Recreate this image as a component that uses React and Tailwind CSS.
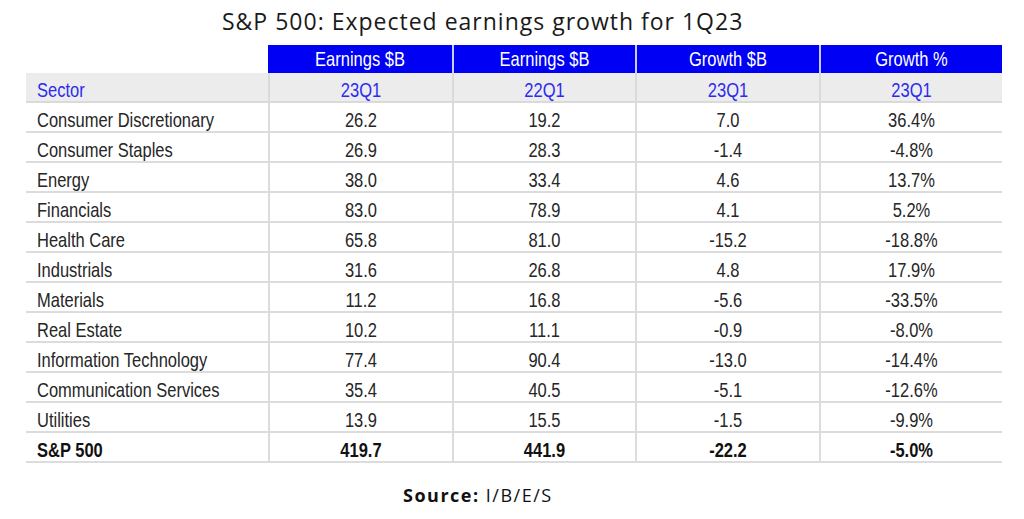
const rows = [
  ["Consumer Discretionary", "26.2", "19.2", "7.0", "36.4%"],
  ["Consumer Staples", "26.9", "28.3", "-1.4", "-4.8%"],
  ["Energy", "38.0", "33.4", "4.6", "13.7%"],
  ["Financials", "83.0", "78.9", "4.1", "5.2%"],
  ["Health Care", "65.8", "81.0", "-15.2", "-18.8%"],
  ["Industrials", "31.6", "26.8", "4.8", "17.9%"],
  ["Materials", "11.2", "16.8", "-5.6", "-33.5%"],
  ["Real Estate", "10.2", "11.1", "-0.9", "-8.0%"],
  ["Information Technology", "77.4", "90.4", "-13.0", "-14.4%"],
  ["Communication Services", "35.4", "40.5", "-5.1", "-12.6%"],
  ["Utilities", "13.9", "15.5", "-1.5", "-9.9%"],
];

const total = ["S&P 500", "419.7", "441.9", "-22.2", "-5.0%"];

const heads = ["Earnings $B", "Earnings $B", "Growth $B", "Growth %"];
const periods = ["23Q1", "22Q1", "23Q1", "23Q1"];

// text in the source image is stretched vertically
function T({ children }) {
  return <span className="inline-block scale-y-[1.22]">{children}</span>;
}

function Row({ cells, bold }) {
  return (
    <>
      {cells.map((c, i) => (
        <div
          key={i}
          className={`h-[30px] pt-[7px] flex items-center border-b-2 border-[#dcdcdc] ${
            i === 0 ? "pl-[11px]" : "justify-center border-l-2"
          } ${bold ? "font-bold text-[#111]" : "text-[#262626]"}`}
        >
          <T>{c}</T>
        </div>
      ))}
    </>
  );
}

export default function App() {
  return (
    <div className="w-[1024px] h-[519px] bg-white flex flex-col items-start">
      <h1
        className="mt-[5px] ml-[222px] h-[32px] text-[23px] tracking-[1px] text-[#1a1a1a] leading-[32px] whitespace-nowrap"
        style={{ fontFamily: '"Open Sans", sans-serif' }}
      >
        S&amp;P 500: Expected earnings growth for 1Q23
      </h1>

      <div
        className="mt-[8px] ml-[26px] grid grid-cols-[242px_184px_183px_184px_183px] text-[16.5px] leading-none"
        style={{ fontFamily: '"Liberation Sans", Arial, sans-serif' }}
      >
        <div className="h-[28px]" />
        {heads.map((h, i) => (
          <div
            key={i}
            className={`h-[28px] bg-[#0000f5] text-white flex items-center justify-center ${
              i > 0 ? "border-l-2 border-[#c9ccf5]" : ""
            }`}
          >
            <T>{h}</T>
          </div>
        ))}

        <div className="h-[30px] pt-[6px] bg-[#ececec] border-b-2 border-[#dadada] text-[#2b2bf0] flex items-center pl-[11px]">
          <T>Sector</T>
        </div>
        {periods.map((p, i) => (
          <div
            key={i}
            className="h-[30px] pt-[6px] bg-[#ececec] border-b-2 border-l-2 border-[#dadada] text-[#2b2bf0] flex items-center justify-center"
          >
            <T>{p}</T>
          </div>
        ))}

        {rows.map((r, i) => (
          <Row key={i} cells={r} />
        ))}
        <Row cells={total} bold />
      </div>

      <p
        className="mt-[19px] ml-[403px] text-[18px] tracking-[1.5px] text-[#111] whitespace-nowrap"
        style={{ fontFamily: '"Open Sans", sans-serif' }}
      >
        <span className="font-bold">Source:</span> I/B/E/S
      </p>
    </div>
  );
}
